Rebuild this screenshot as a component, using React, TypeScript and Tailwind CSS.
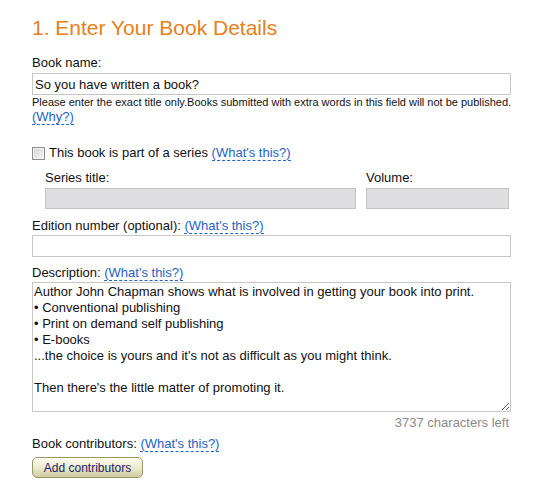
import React from 'react'

const font = { fontFamily: '"Liberation Sans", Arial, sans-serif' }

function WhatsThis({ label = "(What's this?)" }: { label?: string }) {
  return (
    <a href="#" className="border-b border-dashed border-[#2462c6] leading-[14px] text-[#2462c6]">
      {label}
    </a>
  )
}

const description = `Author John Chapman shows what is involved in getting your book into print.
• Conventional publishing
• Print on demand self publishing
• E-books
...the choice is yours and it's not as difficult as you might think.

Then there's the little matter of promoting it.`

export default function App() {
  return (
    <div className="min-h-[500px] w-[553px] bg-white pl-[32px] pt-[16px] text-[13px] leading-[16px] text-[#111]" style={font}>
      <h1 className="text-[21px] leading-[24px] text-[#e8801a]">1. Enter Your Book Details</h1>

      {/* Book name */}
      <label className="mt-[15px] block">Book name:</label>
      <input
        type="text"
        defaultValue="So you have written a book?"
        className="mt-[2px] block h-[22px] w-[479px] border border-[#c7c7c7] bg-white px-[2px] text-[13px] text-[#111] outline-none"
        style={font}
      />
      <p className="mt-[1px] text-[11px] leading-[13px] text-[#111]">
        Please enter the exact title only.Books submitted with extra words in this field will not be published.
      </p>
      <div>
        <WhatsThis label="(Why?)" />
      </div>

      {/* Series */}
      <div className="mt-[20px] flex items-center gap-[4px]">
        <span className="flex h-[13px] w-[13px] items-center justify-center border border-[#8c8c8c] bg-[#f2f2f2]">
          <span className="h-[9px] w-[9px] bg-gradient-to-br from-[#d6d6d6] to-[#f4f4f4]" />
        </span>
        <span>
          This book is part of a series <WhatsThis />
        </span>
      </div>
      <div className="mt-[9px] flex gap-[10px] pl-[13px]">
        <div className="flex w-[311px] flex-col">
          <label>Series title:</label>
          <input
            type="text"
            disabled
            className="mt-[2px] block h-[21px] w-full border border-[#c4c4c4] bg-[#dfdfe2]"
          />
        </div>
        <div className="flex w-[143px] flex-col">
          <label>Volume:</label>
          <input
            type="text"
            disabled
            className="mt-[2px] block h-[21px] w-full border border-[#c4c4c4] bg-[#dfdfe2]"
          />
        </div>
      </div>

      {/* Edition */}
      <div className="mt-[9px]">
        Edition number (optional): <WhatsThis />
      </div>
      <input
        type="text"
        className="mt-[1px] block h-[22px] w-[479px] border border-[#c7c7c7] bg-white px-[2px] outline-none"
      />

      {/* Description */}
      <div className="mt-[8px]">
        Description: <WhatsThis />
      </div>
      <textarea
        defaultValue={description}
        className="mt-[1px] block h-[130px] w-[479px] resize-y overflow-hidden border border-[#c7c7c7] bg-white py-[1px] pl-[1px] pr-[2px] text-[13px] leading-[16px] text-[#111] outline-none"
        style={font}
      />
      <div className="mt-[3px] w-[479px] pr-[2px] text-right text-[#8a8a8a]">3737 characters left</div>

      {/* Contributors */}
      <div className="mt-[5px]">
        Book contributors: <WhatsThis />
      </div>
      <button
        type="button"
        className="mt-[5px] flex h-[21px] w-[111px] items-center justify-center rounded-[5px] border border-[#9a9766] bg-gradient-to-b from-[#fdfdf0] via-[#ecebcf] to-[#cfcca0] text-[12px] text-[#1c1a6b]"
        style={font}
      >
        Add contributors
      </button>
    </div>
  )
}
